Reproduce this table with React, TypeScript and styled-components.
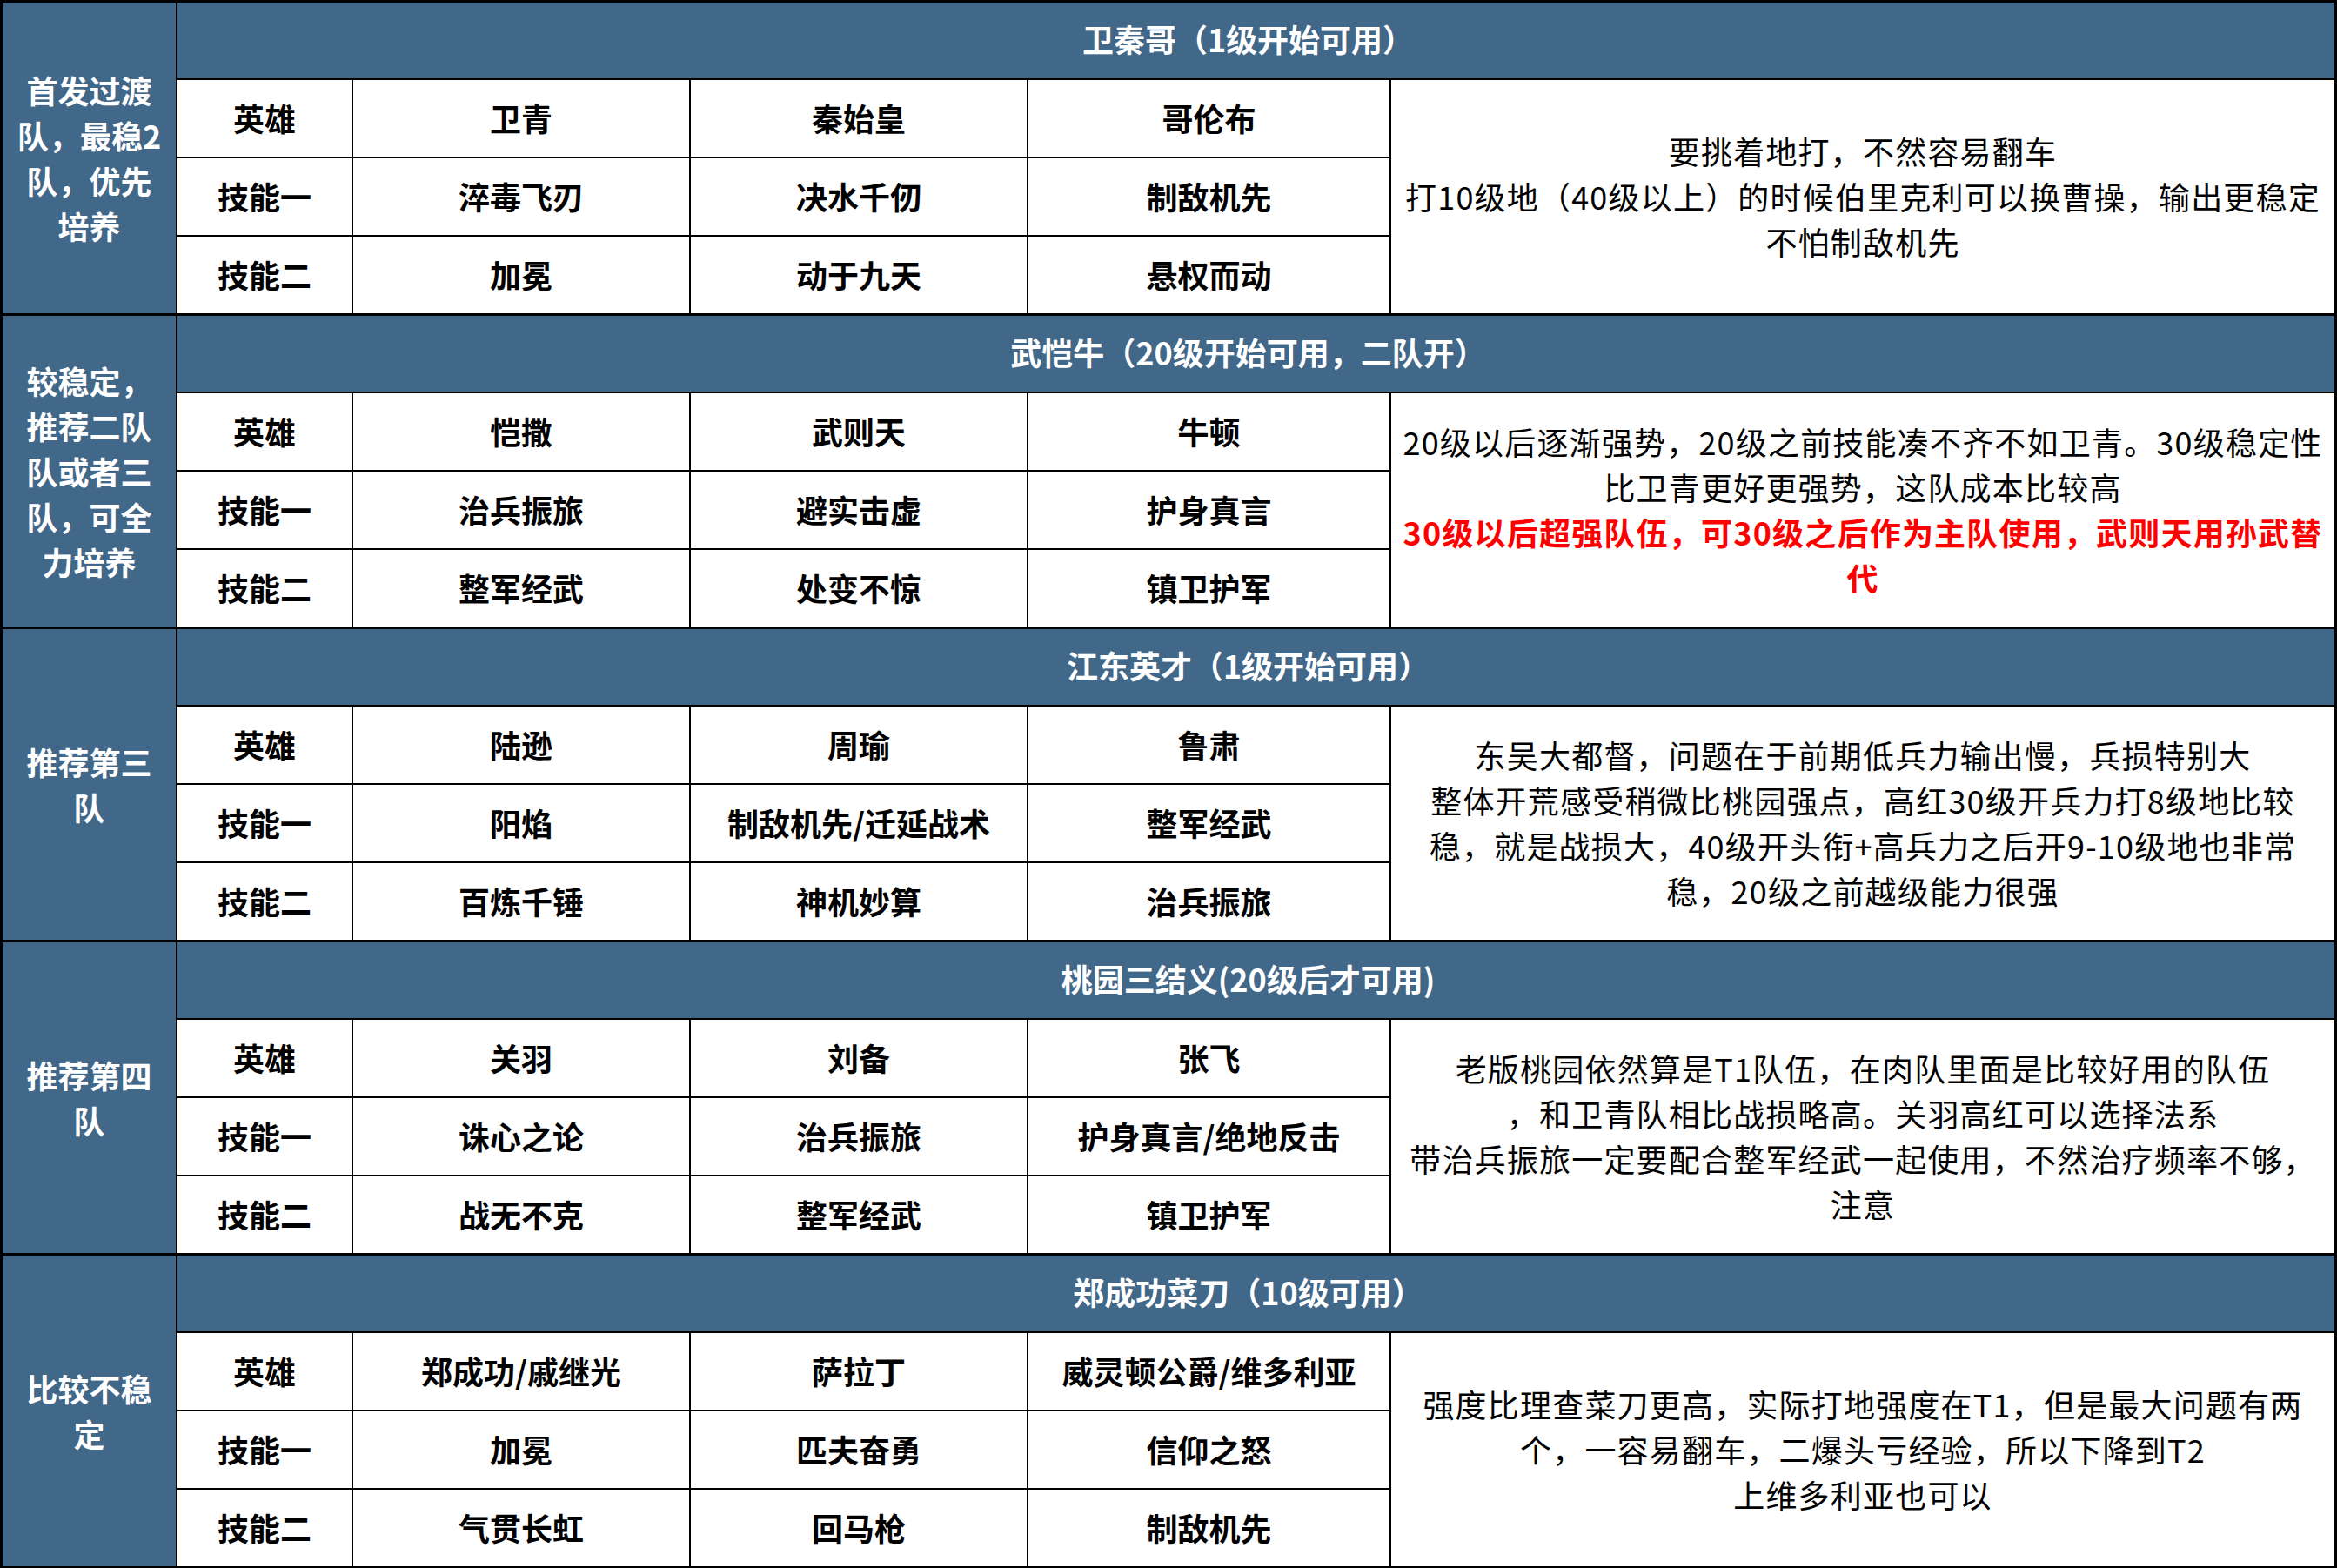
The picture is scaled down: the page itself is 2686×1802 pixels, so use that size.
import React from "react";
import styled, { createGlobalStyle } from "styled-components";

const GlobalStyle = createGlobalStyle`
  html, body {
    margin: 0;
    padding: 0;
    background: #ffffff;
  }
  body {
    font-family: "Noto Sans CJK SC", "Noto Sans", "Liberation Sans", sans-serif;
  }
`;

type Note = { text: string; red?: boolean };

type Team = {
  label: string[];
  title: string;
  heroes: string[];
  skill1: string[];
  skill2: string[];
  notes: Note[];
};

const teams: Team[] = [
  {
    label: ["首发过渡", "队，最稳2", "队，优先", "培养"],
    title: "卫秦哥（1级开始可用）",
    heroes: ["卫青", "秦始皇", "哥伦布"],
    skill1: ["淬毒飞刃", "决水千仞", "制敌机先"],
    skill2: ["加冕", "动于九天", "悬权而动"],
    notes: [
      { text: "要挑着地打，不然容易翻车" },
      { text: "打10级地（40级以上）的时候伯里克利可以换曹操，输出更稳定" },
      { text: "不怕制敌机先" },
    ],
  },
  {
    label: ["较稳定，", "推荐二队", "队或者三", "队，可全", "力培养"],
    title: "武恺牛（20级开始可用，二队开）",
    heroes: ["恺撒", "武则天", "牛顿"],
    skill1: ["治兵振旅", "避实击虚", "护身真言"],
    skill2: ["整军经武", "处变不惊", "镇卫护军"],
    notes: [
      { text: "20级以后逐渐强势，20级之前技能凑不齐不如卫青。30级稳定性" },
      { text: "比卫青更好更强势，这队成本比较高" },
      { text: "30级以后超强队伍，可30级之后作为主队使用，武则天用孙武替", red: true },
      { text: "代", red: true },
    ],
  },
  {
    label: ["推荐第三", "队"],
    title: "江东英才（1级开始可用）",
    heroes: ["陆逊", "周瑜", "鲁肃"],
    skill1: ["阳焰", "制敌机先/迁延战术", "整军经武"],
    skill2: ["百炼千锤", "神机妙算", "治兵振旅"],
    notes: [
      { text: "东吴大都督，问题在于前期低兵力输出慢，兵损特别大" },
      { text: "整体开荒感受稍微比桃园强点，高红30级开兵力打8级地比较" },
      { text: "稳，就是战损大，40级开头衔+高兵力之后开9-10级地也非常" },
      { text: "稳，20级之前越级能力很强" },
    ],
  },
  {
    label: ["推荐第四", "队"],
    title: "桃园三结义(20级后才可用)",
    heroes: ["关羽", "刘备", "张飞"],
    skill1: ["诛心之论", "治兵振旅", "护身真言/绝地反击"],
    skill2: ["战无不克", "整军经武", "镇卫护军"],
    notes: [
      { text: "老版桃园依然算是T1队伍，在肉队里面是比较好用的队伍" },
      { text: "，和卫青队相比战损略高。关羽高红可以选择法系" },
      { text: "带治兵振旅一定要配合整军经武一起使用，不然治疗频率不够，" },
      { text: "注意" },
    ],
  },
  {
    label: ["比较不稳", "定"],
    title: "郑成功菜刀（10级可用）",
    heroes: ["郑成功/戚继光", "萨拉丁", "威灵顿公爵/维多利亚"],
    skill1: ["加冕", "匹夫奋勇", "信仰之怒"],
    skill2: ["气贯长虹", "回马枪", "制敌机先"],
    notes: [
      { text: "强度比理查菜刀更高，实际打地强度在T1，但是最大问题有两" },
      { text: "个，一容易翻车，二爆头亏经验，所以下降到T2" },
      { text: "上维多利亚也可以" },
    ],
  },
];

const rowNames = ["英雄", "技能一", "技能二"];

// thin black lines come from the sheet background showing through the grid gaps
const Sheet = styled.div`
  width: 2686px;
  height: 1802px;
  box-sizing: border-box;
  background: #000000;
  padding: 3px 3px 2px 3px;
  display: flex;
  flex-direction: column;
  gap: 3px;
`;

const Section = styled.section`
  display: grid;
  grid-template-columns: 199px 200px 386px 386px 415px 1084px;
  grid-template-rows: 87px 88px 88px 88px;
  gap: 2px;
`;

const Label = styled.div`
  grid-column: 1;
  grid-row: 1 / span 4;
  background: #416789;
  color: #ffffff;
  font-weight: 700;
  font-size: 36px;
  line-height: 52px;
  display: flex;
  align-items: center;
  justify-content: center;
  text-align: center;
  padding-bottom: 2px;
`;

const Title = styled.div`
  grid-column: 2 / span 5;
  grid-row: 1;
  background: #416789;
  color: #ffffff;
  font-weight: 700;
  font-size: 36px;
  display: flex;
  align-items: center;
  justify-content: center;
  padding: 0 18px 6px 0;
`;

const Cell = styled.div<{ $col: number; $row: number }>`
  grid-column: ${(p) => p.$col};
  grid-row: ${(p) => p.$row};
  background: #ffffff;
  color: #000000;
  font-weight: 700;
  font-size: 36px;
  display: flex;
  align-items: center;
  justify-content: center;
  white-space: nowrap;
  padding-bottom: 3px;
`;

const Notes = styled.div`
  grid-column: 6;
  grid-row: 2 / span 3;
  background: #ffffff;
  display: flex;
  flex-direction: column;
  justify-content: center;
  align-items: center;
  padding-bottom: 2px;
`;

const NoteLine = styled.div<{ $red?: boolean }>`
  font-size: 36px;
  line-height: 52px;
  letter-spacing: 1.2px;
  white-space: nowrap;
  color: ${(p) => (p.$red ? "#ff0000" : "#000000")};
  font-weight: ${(p) => (p.$red ? 700 : 400)};
`;

const App: React.FC = () => {
  return (
    <>
      <GlobalStyle />
      <Sheet>
        {teams.map((team) => (
          <Section key={team.title}>
            <Label>
              <div>
                {team.label.map((line) => (
                  <div key={line}>{line}</div>
                ))}
              </div>
            </Label>
            <Title>{team.title}</Title>
            {[team.heroes, team.skill1, team.skill2].map((values, r) => (
              <React.Fragment key={rowNames[r]}>
                <Cell $col={2} $row={r + 2}>
                  {rowNames[r]}
                </Cell>
                {values.map((v, c) => (
                  <Cell key={c} $col={c + 3} $row={r + 2}>
                    {v}
                  </Cell>
                ))}
              </React.Fragment>
            ))}
            <Notes>
              {team.notes.map((n, i) => (
                <NoteLine key={i} $red={n.red}>
                  {n.text}
                </NoteLine>
              ))}
            </Notes>
          </Section>
        ))}
      </Sheet>
    </>
  );
};

export default App;
